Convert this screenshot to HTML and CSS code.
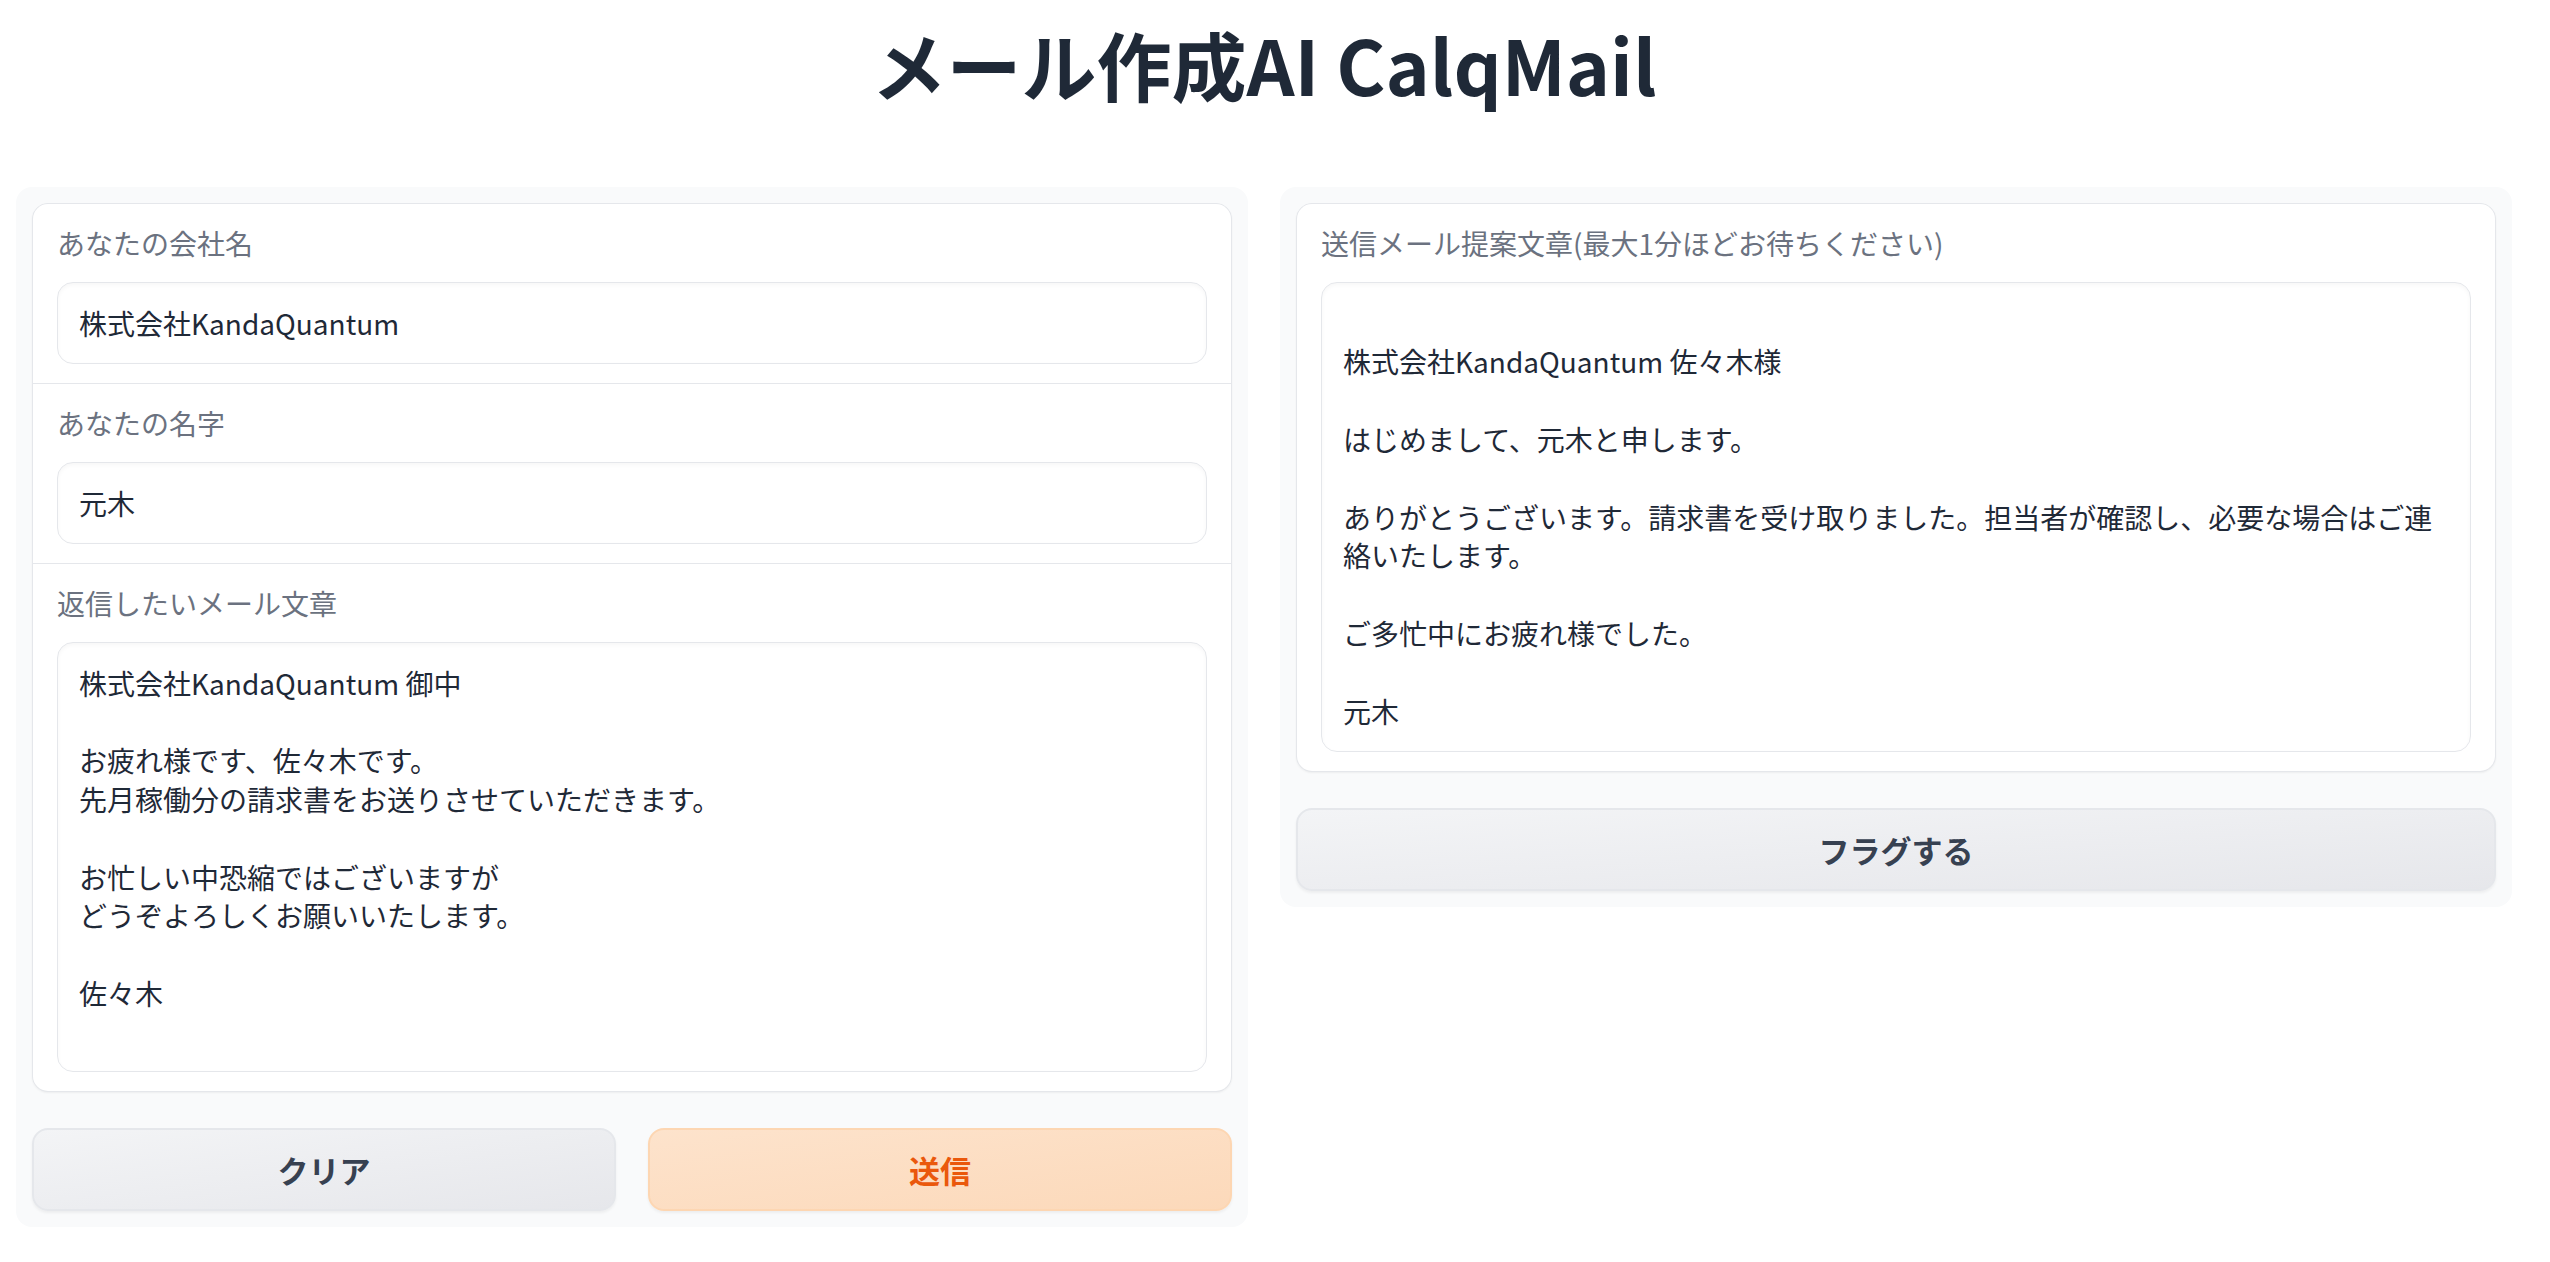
FILE: index.html
```html
<!DOCTYPE html>
<html lang="ja">
<head>
<meta charset="utf-8">
<title>メール作成AI CalqMail</title>
<link rel="stylesheet" href="styles.css">
</head>
<body>
<div class="app">
  <h1 class="title">メール作成AI CalqMail</h1>
  <div class="row">
    <div class="panel">
      <div class="form">
        <label class="block">
          <span class="label">あなたの会社名</span>
          <input class="input" type="text" value="株式会社KandaQuantum">
        </label>
        <label class="block">
          <span class="label">あなたの名字</span>
          <input class="input" type="text" value="元木">
        </label>
        <label class="block">
          <span class="label">返信したいメール文章</span>
          <textarea class="input area">株式会社KandaQuantum 御中

お疲れ様です、佐々木です。
先月稼働分の請求書をお送りさせていただきます。

お忙しい中恐縮ではございますが
どうぞよろしくお願いいたします。

佐々木</textarea>
        </label>
      </div>
      <div class="btn-row">
        <button class="btn secondary">クリア</button>
        <button class="btn primary">送信</button>
      </div>
    </div>
    <div class="panel">
      <div class="form">
        <div class="block">
          <span class="label">送信メール提案文章(最大1分ほどお待ちください)</span>
          <div class="input output">
株式会社KandaQuantum 佐々木様

はじめまして、元木と申します。

ありがとうございます。請求書を受け取りました。担当者が確認し、必要な場合はご連絡いたします。

ご多忙中にお疲れ様でした。

元木</div>
        </div>
      </div>
      <div class="btn-row">
        <button class="btn secondary">フラグする</button>
      </div>
    </div>
  </div>
</div>
</body>
</html>
```

FILE: styles.css
```css
* {
  box-sizing: border-box;
}

html, body {
  margin: 0;
  padding: 0;
  background: #ffffff;
}

body {
  font-family: "Noto Sans CJK JP", "Noto Sans", sans-serif;
  color: #1f2937;
}

.app {
  padding: 0 38px 0 16px;
}

.title {
  margin: 8px 0 68px;
  font-size: 75px;
  font-weight: 700;
  line-height: 111px;
  text-align: center;
  color: #1f2937;
  letter-spacing: 0;
}

.row {
  display: flex;
  gap: 32px;
  align-items: flex-start;
}

.panel {
  flex: 1 1 0;
  min-width: 0;
  background: #f9fafb;
  border-radius: 16px;
  padding: 16px;
  display: flex;
  flex-direction: column;
  gap: 32px;
}

.form {
  display: flex;
  flex-direction: column;
  gap: 1px;
  background: #e5e7eb;
  border: 1px solid #e5e7eb;
  border-radius: 16px;
  overflow: hidden;
  box-shadow: 0 1px 2px rgba(0, 0, 0, 0.05);
}

.block {
  display: block;
  background: #ffffff;
  padding: 18px 24px 19px;
}

.label {
  display: block;
  font-size: 28px;
  line-height: 42px;
  color: #6b7280;
  margin-bottom: 18px;
}

.input {
  display: block;
  width: 100%;
  margin: 0;
  font-family: "Noto Sans CJK JP", "Noto Sans", sans-serif;
  font-size: 28px;
  line-height: 38.8px;
  color: #1f2937;
  background: #ffffff;
  border: 1px solid #e5e7eb;
  border-radius: 16px;
  padding: 20.6px 21px;
  box-shadow: inset 0 2px 4px rgba(0, 0, 0, 0.035);
  outline: none;
}

.area {
  height: 430px;
  resize: none;
  overflow: hidden;
}

.output {
  white-space: pre-wrap;
  word-break: break-all;
}

.btn-row {
  display: flex;
  gap: 32px;
  margin-top: 4px;
}

.btn {
  flex: 1 1 0;
  height: 83px;
  border-radius: 16px;
  font-family: "Noto Sans CJK JP", "Noto Sans", sans-serif;
  font-size: 31px;
  font-weight: 700;
  cursor: pointer;
  box-shadow: 0 2px 3px rgba(0, 0, 0, 0.05);
}

.secondary {
  background: linear-gradient(to bottom right, #f3f4f6, #e6e7eb);
  border: 2px solid #e5e7eb;
  color: #374151;
}

.primary {
  background: linear-gradient(to bottom right, #fde3cc, #fcd9ba);
  border: 2px solid #fdd6b2;
  color: #ea580c;
}
```
